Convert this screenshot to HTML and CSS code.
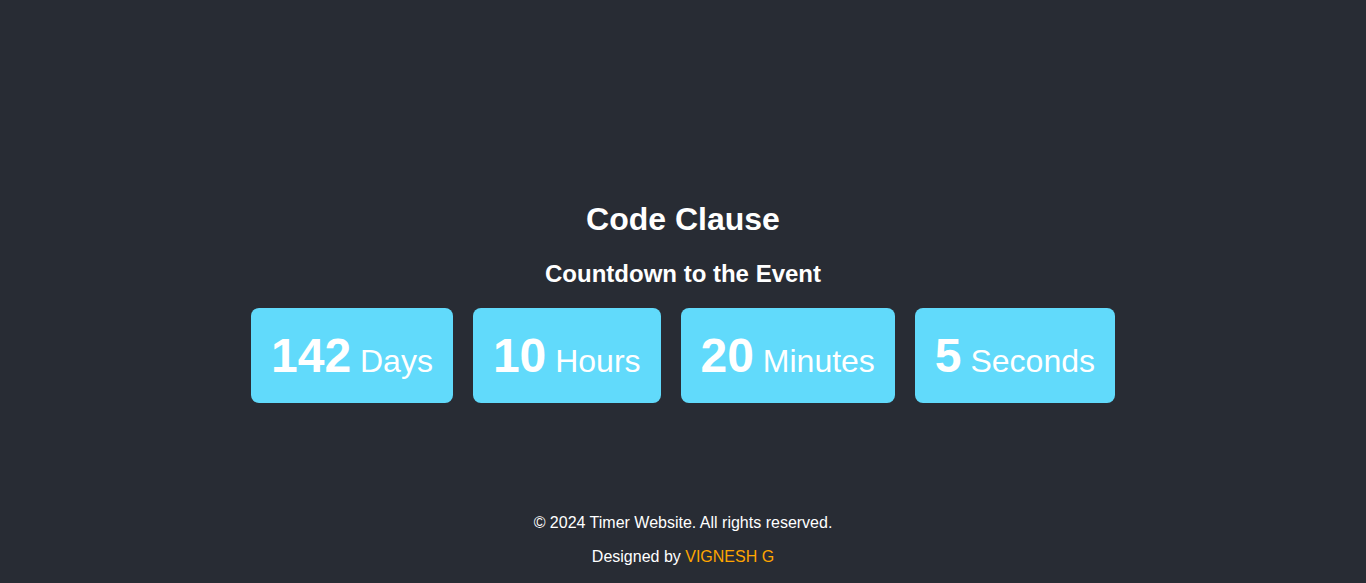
FILE: index.html
```html
<!DOCTYPE html>
<html lang="en">
<head>
<meta charset="UTF-8">
<title>Code Clause - Countdown</title>
<link rel="stylesheet" href="styles.css">
</head>
<body>
<main class="main">
  <h1 class="title">Code Clause</h1>
  <h2 class="subtitle">Countdown to the Event</h2>
  <div class="timer">
    <div class="box"><span class="num">142</span> <span class="unit">Days</span></div>
    <div class="box"><span class="num">10</span> <span class="unit">Hours</span></div>
    <div class="box"><span class="num">20</span> <span class="unit">Minutes</span></div>
    <div class="box"><span class="num">5</span> <span class="unit">Seconds</span></div>
  </div>
</main>
<footer class="footer">
  <p class="line">&copy; 2024 Timer Website. All rights reserved.</p>
  <p class="line">Designed by <span class="author">VIGNESH G</span></p>
</footer>
</body>
</html>
```

FILE: styles.css
```css
html, body {
  margin: 0;
  padding: 0;
}
body {
  background: #282c34;
  color: #ffffff;
  font-family: "Liberation Sans", Arial, sans-serif;
  height: 100vh;
  display: flex;
  flex-direction: column;
  text-align: center;
}
.main {
  flex: 1;
  display: flex;
  flex-direction: column;
  align-items: center;
  padding-top: 180px;
}
.title {
  font-size: 32px;
  font-weight: bold;
  margin: 21.44px 0;
}
.subtitle {
  font-size: 24px;
  font-weight: bold;
  margin: 0 0 19.92px;
}
.timer {
  display: flex;
  gap: 20px;
  justify-content: center;
}
.box {
  background: #61dafb;
  border-radius: 8px;
  padding: 20px;
  font-size: 32px;
  color: #ffffff;
}
.num {
  font-size: 48px;
  font-weight: bold;
}
.footer {
  padding-bottom: 1px;
}
.line {
  margin: 16px 0;
  font-size: 16px;
}
.author {
  color: #ffa500;
}
```
